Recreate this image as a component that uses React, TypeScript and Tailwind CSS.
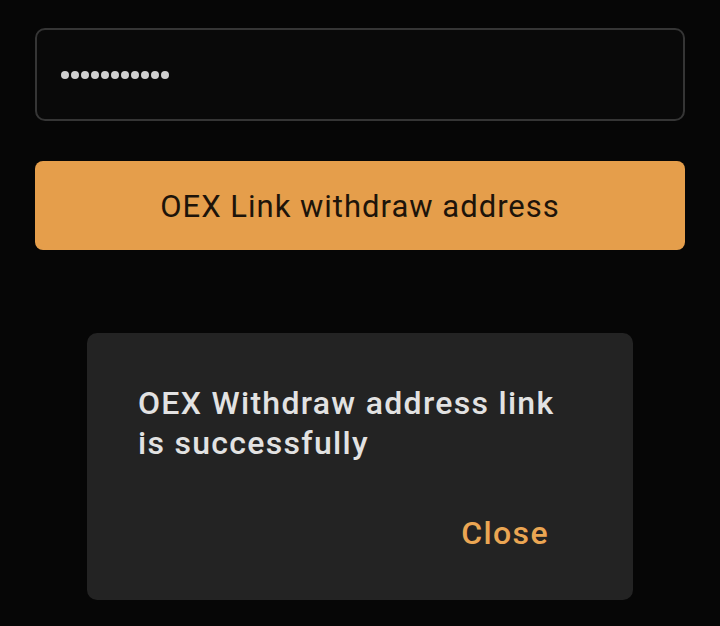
export default function App() {
  const dots = Array.from({ length: 11 });
  return (
    <div
      className="min-h-[626px] w-full bg-[#060606] px-[35px] pt-[28px]"
      style={{ fontFamily: "Roboto, 'Noto Sans', sans-serif" }}
    >
      {/* password field */}
      <div className="flex h-[93px] items-center rounded-[10px] border-2 border-[#353535] bg-[#090909] pl-[24px]">
        <div className="flex gap-[2px]">
          {dots.map((_, i) => (
            <span key={i} className="block h-[8px] w-[8px] rounded-full bg-[#cfcfcf]" />
          ))}
        </div>
      </div>

      {/* submit */}
      <button className="mt-[40px] flex h-[89px] w-full items-center justify-center rounded-[8px] bg-[#e59e4b] pt-[3px] text-[31px] tracking-[1px] text-[#1d140a]">
        OEX Link withdraw address
      </button>

      {/* success dialog */}
      <div className="mx-[52px] mt-[83px] rounded-[10px] bg-[#232323] pb-[47px] pl-[51px] pr-[84px] pt-[50px]">
        <p className="whitespace-nowrap text-[32px] font-medium leading-[40px] tracking-[1.3px] text-[#e2e2e2]">
          OEX Withdraw address link
          <br />
          is successfully
        </p>
        <div className="mt-[50px] flex justify-end">
          <span className="text-[32px] font-medium leading-[40px] tracking-[1.4px] text-[#eba653]">Close</span>
        </div>
      </div>
    </div>
  );
}
